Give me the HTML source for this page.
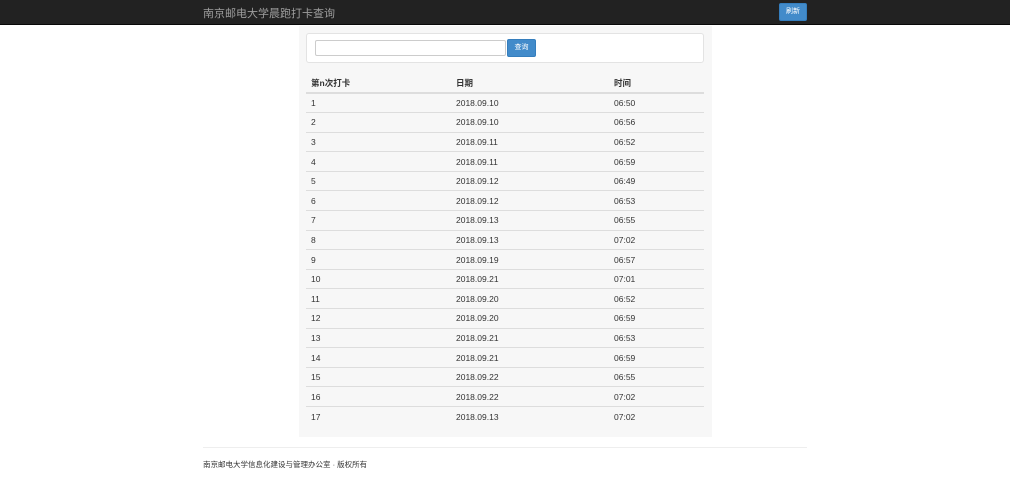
<!DOCTYPE html>
<html><head><meta charset="utf-8"><style>
*{margin:0;padding:0;box-sizing:border-box}
body{width:1010px;height:500px;background:#fff;font-family:"Liberation Sans","Noto Sans CJK SC",sans-serif;font-size:8.5px;color:#333;position:relative;overflow:hidden}
.nav{position:absolute;left:0;top:0;width:1010px;height:25px;background:#222;border-bottom:1px solid #080808}
.title{position:absolute;left:203px;top:5px;font-size:11px;color:#9d9d9d}
.rbtn{position:absolute;left:779px;top:3px;width:28px;height:18px;background:#428bca;border:1px solid #357ebd;border-radius:2px;color:#fff;font-size:7px;text-align:center;line-height:16px}
.panel{position:absolute;left:299px;top:26px;width:413px;height:411px;background:#f7f7f7}
.box{position:absolute;left:306px;top:33px;width:398px;height:30px;background:#fff;border:1px solid #e3e3e3;border-radius:3px}
.inp{position:absolute;left:315px;top:40px;width:191px;height:16px;border:1px solid #ccc;border-radius:2px;background:#fff}
.qbtn{position:absolute;left:507px;top:39px;width:29px;height:18px;background:#428bca;border:1px solid #357ebd;border-radius:2px;color:#fff;font-size:7px;text-align:center;line-height:16px}
table{position:absolute;left:306px;top:73px;width:398px;border-collapse:collapse}
td,th{height:19.6px;padding-left:5px;text-align:left;vertical-align:middle;border-top:1px solid #ddd;font-weight:normal}
th{font-weight:bold;border-top:none;border-bottom:2px solid #ddd;height:20px}
td:nth-child(1),th:nth-child(1){width:145px}
td:nth-child(2),th:nth-child(2){width:158px}
.hr{position:absolute;left:203px;top:447px;width:604px;border-top:1px solid #eee}
.foot{position:absolute;left:203px;top:459px;font-size:7.5px;color:#333}
</style></head><body>
<div class="nav"><div class="title">南京邮电大学晨跑打卡查询</div><div class="rbtn">刷新</div></div>
<div class="panel"></div>
<div class="box"></div>
<div class="inp"></div><div class="qbtn">查询</div>
<table>
<tr><th>第n次打卡</th><th>日期</th><th>时间</th></tr>
<tr><td>1</td><td>2018.09.10</td><td>06:50</td></tr>
<tr><td>2</td><td>2018.09.10</td><td>06:56</td></tr>
<tr><td>3</td><td>2018.09.11</td><td>06:52</td></tr>
<tr><td>4</td><td>2018.09.11</td><td>06:59</td></tr>
<tr><td>5</td><td>2018.09.12</td><td>06:49</td></tr>
<tr><td>6</td><td>2018.09.12</td><td>06:53</td></tr>
<tr><td>7</td><td>2018.09.13</td><td>06:55</td></tr>
<tr><td>8</td><td>2018.09.13</td><td>07:02</td></tr>
<tr><td>9</td><td>2018.09.19</td><td>06:57</td></tr>
<tr><td>10</td><td>2018.09.21</td><td>07:01</td></tr>
<tr><td>11</td><td>2018.09.20</td><td>06:52</td></tr>
<tr><td>12</td><td>2018.09.20</td><td>06:59</td></tr>
<tr><td>13</td><td>2018.09.21</td><td>06:53</td></tr>
<tr><td>14</td><td>2018.09.21</td><td>06:59</td></tr>
<tr><td>15</td><td>2018.09.22</td><td>06:55</td></tr>
<tr><td>16</td><td>2018.09.22</td><td>07:02</td></tr>
<tr><td>17</td><td>2018.09.13</td><td>07:02</td></tr>
</table>
<div class="hr"></div>
<div class="foot">南京邮电大学信息化建设与管理办公室 · 版权所有</div>
</body></html>
